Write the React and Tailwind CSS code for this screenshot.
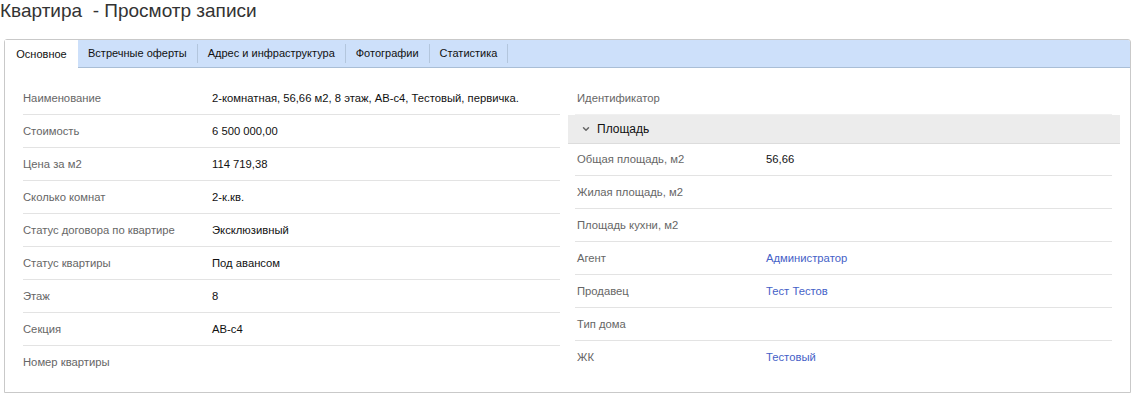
import { ChevronDown } from "lucide-react";

const leftRows = [
  ["Наименование", "2-комнатная, 56,66 м2, 8 этаж, АВ-с4, Тестовый, первичка."],
  ["Стоимость", "6 500 000,00"],
  ["Цена за м2", "114 719,38"],
  ["Сколько комнат", "2-к.кв."],
  ["Статус договора по квартире", "Эксклюзивный"],
  ["Статус квартиры", "Под авансом"],
  ["Этаж", "8"],
  ["Секция", "АВ-с4"],
  ["Номер квартиры", ""],
];

const areaRows = [
  ["Общая площадь, м2", "56,66"],
  ["Жилая площадь, м2", ""],
  ["Площадь кухни, м2", ""],
  ["Агент", "Администратор", true],
  ["Продавец", "Тест Тестов", true],
  ["Тип дома", ""],
  ["ЖК", "Тестовый", true],
];

const tabs = ["Встречные оферты", "Адрес и инфраструктура", "Фотографии", "Статистика"];

function Row({ label, value, link, last, first, inset }) {
  return (
    <div
      className={`flex items-center ${first ? "h-[32px]" : "h-[33px]"} ${
        inset ? "pl-[2px]" : ""
      } ${last ? "" : "border-b border-[#e3e3e3]"}`}
    >
      <div className="w-[189px] shrink-0 text-[#666]">{label}</div>
      <div className={link ? "text-[#4561c7]" : "text-[#111]"}>{value}</div>
    </div>
  );
}

export default function App() {
  return (
    <div
      className="bg-white w-[1134px] h-[395px] text-[11.25px]"
      style={{ fontFamily: "Arial, 'Liberation Sans', sans-serif" }}
    >
      <h1 className="text-[19px] leading-[22px] text-[#333] h-[39px] whitespace-pre">
        Квартира  - Просмотр записи
      </h1>
      <div className="ml-[4px] w-[1127px] h-[354px] border border-[#c9c9c9] rounded-t-[3px] flex flex-col">
        <div className="h-[28px] bg-[#cde0fa] border-b border-[#a9bed6] flex items-stretch rounded-t-[2px] text-[11px]">
          <div className="bg-white w-[73px] h-[28px] flex items-center justify-center text-[#111]">
            Основное
          </div>
          {tabs.map((t) => (
            <div key={t} className="flex items-center">
              <div className="px-[10px] text-[#111]">{t}</div>
              <div className="w-px h-[19px] bg-[#b3c6dd]" />
            </div>
          ))}
        </div>
        <div className="flex pt-[14px]">
          <div className="ml-[18px] w-[537px]">
            {leftRows.map(([l, v], i) => (
              <Row key={l} label={l} value={v} last={i === leftRows.length - 1} />
            ))}
          </div>
          <div className="ml-[8px] w-[552px]">
            <div className="ml-[7px] mr-[8px] pl-[2px] h-[33px] flex items-center text-[#666] border-b border-[#f0f0f0]">
              Идентификатор
            </div>
            <div className="h-[29px] bg-[#ececec] border-b border-[#dcdcdc] flex items-center pl-[13px] text-[12px] text-[#111]">
              <ChevronDown size={10} strokeWidth={3.5} className="text-[#666] mr-[6px]" />
              Площадь
            </div>
            <div className="ml-[7px] mr-[8px]">
              {areaRows.map(([l, v, link], i) => (
                <Row
                  key={l}
                  label={l}
                  value={v}
                  link={link}
                  inset
                  first={i === 0}
                  last={i === areaRows.length - 1}
                />
              ))}
            </div>
          </div>
        </div>
      </div>
    </div>
  );
}
